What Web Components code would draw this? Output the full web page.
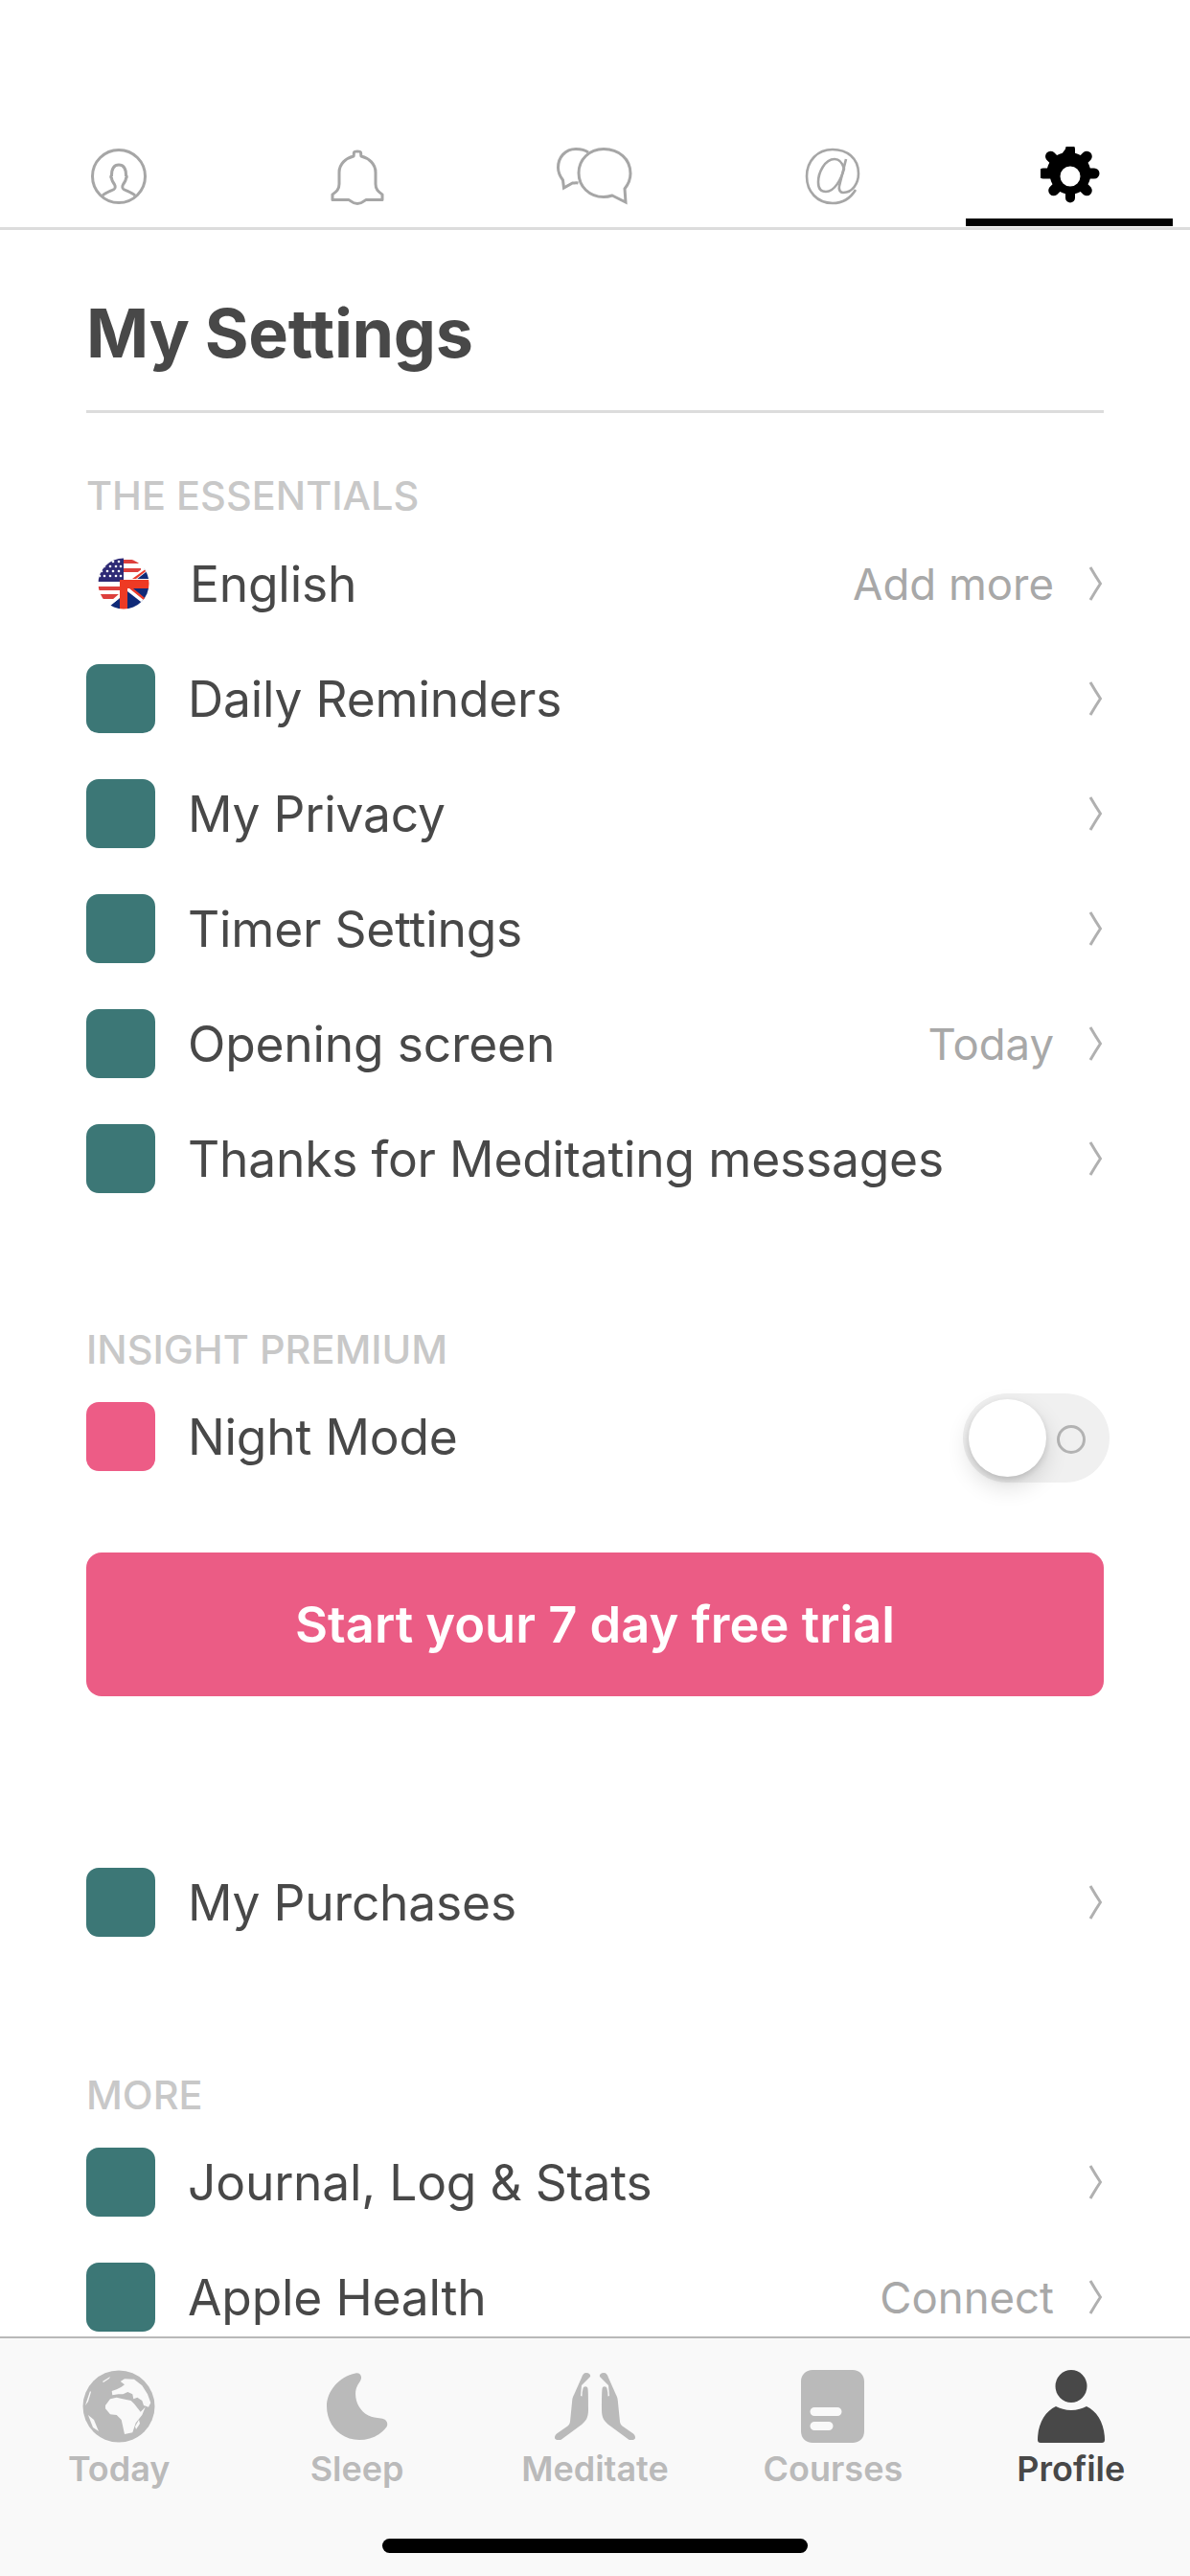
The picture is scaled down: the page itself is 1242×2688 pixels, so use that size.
<!DOCTYPE html>
<html>
<head>
<meta charset="utf-8">
<title>My Settings</title>
<style>
  html, body { margin: 0; padding: 0; background: #fff; }
  body { font-family: Inter, "Liberation Sans", sans-serif; width: 1242px; height: 2688px; overflow: hidden; }
</style>
</head>
<body>
<app-shell>
  <top-tabs></top-tabs>
  <settings-title>My Settings</settings-title>

  <section-label top="61" bottom="7">THE ESSENTIALS</section-label>
  <setting-row icon="flag" value="Add more">English</setting-row>
  <setting-row>Daily Reminders</setting-row>
  <setting-row>My Privacy</setting-row>
  <setting-row>Timer Settings</setting-row>
  <setting-row value="Today">Opening screen</setting-row>
  <setting-row>Thanks for Meditating messages</setting-row>

  <section-label top="114" bottom="6">INSIGHT PREMIUM</section-label>
  <setting-row icon="pink" toggle>Night Mode</setting-row>
  <trial-button>Start your 7 day free trial</trial-button>

  <spacer-gap h="155"></spacer-gap>
  <setting-row>My Purchases</setting-row>

  <section-label top="116" bottom="6">MORE</section-label>
  <setting-row>Journal, Log &amp; Stats</setting-row>
  <setting-row value="Connect">Apple Health</setting-row>

  <bottom-nav slot="nav"></bottom-nav>
</app-shell>

<script>
class AppShell extends HTMLElement {
  constructor() {
    super();
    this.attachShadow({ mode: 'open' });
    this.shadowRoot.innerHTML = `
      <style>
        :host { display: flex; flex-direction: column; width: 1242px; height: 2688px; background: #fff; }
        .scroll { flex: 1; min-height: 0; overflow: hidden; display: flex; flex-direction: column; }
        ::slotted(*) { flex: none; }
      </style>
      <div class="scroll"><slot></slot></div>
      <slot name="nav"></slot>
    `;
  }
}

const tabIcons = [
  `<svg width="60" height="60" viewBox="0 0 60 60" fill="none" stroke="#a6a6a6" stroke-width="3">
    <circle cx="30" cy="30" r="27.500"/>
    <path d="M13 50c3-3 8-4.500 12-6.500 1.500-.8 1.500-3.500.5-5-1.500-2-3-4.500-3-6.500-1-.5-1-2.500 0-3 0-5 1.500-11 7.500-11s7.500 6 7.500 11c1 .5 1 2.500 0 3 0 2-1.500 4.500-3 6.500-1 1.500-1 4.200.5 5 4 2 9 3.500 12 6.500"/>
  </svg>`,
  `<svg width="56" height="60" viewBox="0 0 56 60" fill="none" stroke="#a6a6a6" stroke-width="3" stroke-linejoin="round">
    <path d="M2 54.500v-5.500c4-3 7-5 7-11V26c0-9 7-15 15-17 .5-1 0-2 .5-4 .5-1.500 6.500-1.500 7 0 .5 2 0 3 .5 4 8 2 15 8 15 17v12c0 6 3 8 7 11v5.500H37c-2 1-4 4-9 4s-7-3-9-4z"/>
  </svg>`,
  `<svg width="80" height="60" viewBox="0 0 80 60" fill="none" stroke="#a6a6a6" stroke-width="3">
    <path d="M33 5C29 2 24 1.500 20 1.500 9 1.500 1.500 10 1.500 21c0 5 2 9 5 13l1 8 9-5c2 0 4-.5 6 0"/>
    <path d="M49 1.500C65 1.500 77 12 77 27c0 6-2 11-6 16l1 14-14-7c-3 1-6 1.500-9 1.500-15 0-26-11-26-25S34 1.500 49 1.500z"/>
  </svg>`,
  `<svg width="58" height="60" viewBox="0 0 58 60" fill="none" stroke="#a6a6a6" stroke-width="2.600">
    <path d="M43 12L36 40c-1 4 1 7 4 7C50 47 56 37 56 27 56 11 44 2 29 2 13 2 2 14 2 30c0 16 11 28 27 28 10 0 18-4 24-14"/>
    <path d="M41 22C39 15 36 12 31 12 21 12 14 26 14 36c0 7 3 10 8 10 9 0 16-13 19-24z"/>
  </svg>`,
  `<svg width="62" height="62" viewBox="0 0 62 62">
    <path fill="#000" fill-rule="evenodd" d="M26 2.500a5 5 0 0 1 10 0v4.300c2 .5 4 1.300 5.700 2.300l3-3a5.500 5.500 0 0 1 7.800 7.700l-3 3c1 1.800 1.800 3.700 2.300 5.700h4.200a5.500 5.500 0 0 1 0 11h-4.200c-.5 2-1.300 3.900-2.300 5.700l3 3a5.500 5.500 0 0 1-7.800 7.700l-3-3c-1.700 1-3.700 1.800-5.700 2.300v4.200a5 5 0 0 1-10 0v-4.200c-2-.5-4-1.300-5.700-2.300l-3 3a5.500 5.500 0 0 1-7.800-7.700l3-3c-1-1.800-1.800-3.700-2.300-5.700H2.800a5.500 5.500 0 0 1 0-11H7c.5-2 1.300-3.900 2.300-5.700l-3-3a5.500 5.500 0 0 1 7.800-7.700l3 3c1.700-1 3.700-1.800 5.700-2.300z M31 20.500a10.500 10.500 0 1 0 0 21 10.500 10.500 0 0 0 0-21z"/>
  </svg>`
];

class TopTabs extends HTMLElement {
  constructor() {
    super();
    this.attachShadow({ mode: 'open' });
    this.shadowRoot.innerHTML = `
      <style>
        :host { display: grid; grid-template-columns: repeat(5, 1fr); height: 240px; box-sizing: border-box; padding-top: 153px; border-bottom: 3px solid #dcdcdc; }
        .tab { display: flex; justify-content: center; align-items: center; height: 62px; }
        .tab.on { position: relative; }
        .tab.on::after { content: ''; position: absolute; left: 14.400px; right: 18px; top: 75px; height: 8px; background: #000; }
        .tab.on svg { margin-right: 2px; }
      </style>
      ${tabIcons.map((svg, i) => `<div class="tab ${i === 4 ? 'on' : ''}">${svg}</div>`).join('')}
    `;
  }
}

class SettingsTitle extends HTMLElement {
  constructor() {
    super();
    this.attachShadow({ mode: 'open' });
    this.shadowRoot.innerHTML = `
      <style>
        :host { display: block; margin: 0 90px; height: 191px; box-sizing: border-box; padding-top: 68px; border-bottom: 3px solid #dcdcdc; color: #484848; font-size: 70px; font-weight: 700; line-height: 80px; letter-spacing: -0.3px; }
      </style>
      <slot></slot>
    `;
  }
}

class SectionLabel extends HTMLElement {
  constructor() {
    super();
    this.attachShadow({ mode: 'open' });
    const top = this.getAttribute('top') || '60';
    const bottom = this.getAttribute('bottom') || '6';
    this.shadowRoot.innerHTML = `
      <style>
        :host { display: block; margin: ${top}px 90px ${bottom}px; color: #c8c8c8; font-size: 41.500px; font-weight: 500; line-height: 50px; }
      </style>
      <slot></slot>
    `;
  }
}

const flagIcon = `
  <svg width="54" height="54" viewBox="0 0 54 54">
    <defs><clipPath id="c"><circle cx="27" cy="27" r="26.500"/></clipPath></defs>
    <g clip-path="url(#c)">
      <rect width="54" height="54" fill="#fff"/>
      <path d="M27 2h18v4H27zM27 11h18v4H27zM0 30h23v4H0zM0 38h23v5H0z" fill="#dd3f3c"/>
      <path d="M0 0h27v25H0z" fill="#2e2a75"/>
      <path d="M45 14L54 8v14H38z" fill="#0f2a78"/>
      <path d="M31 23L54 6v6L40 23z" fill="#fff"/>
      <path d="M36 22L54 9v2L40 22z" fill="#ea3a2a"/>
      <path d="M31 32h23v22H31z" fill="#0f2a78"/>
      <path d="M34 32l20 16v5L31 35v-3z" fill="#fff"/>
      <path d="M37 32l17 14v3L33 32z" fill="#ea3a2a"/>
      <path d="M23 42v12H8z" fill="#0f2a78"/>
      <path d="M23 37L6 52l2 2 15-12z" fill="#fff"/>
      <path d="M23 23h31v9H31v22h-8z" fill="#ee3a24"/>
      <g fill="#fff">
        <circle cx="7" cy="9" r="1.300"/><circle cx="13" cy="9" r="1.300"/><circle cx="19" cy="9" r="1.300"/><circle cx="24" cy="9" r="1.300"/>
        <circle cx="16" cy="4" r="1.300"/><circle cx="22" cy="4" r="1.300"/>
        <circle cx="4" cy="14" r="1.300"/><circle cx="10" cy="14" r="1.300"/><circle cx="16" cy="14" r="1.300"/><circle cx="22" cy="14" r="1.300"/>
        <circle cx="2" cy="19" r="1.300"/><circle cx="7" cy="19" r="1.300"/><circle cx="13" cy="19" r="1.300"/><circle cx="19" cy="19" r="1.300"/><circle cx="24" cy="19" r="1.300"/>
      </g>
    </g>
  </svg>`;

class SettingRow extends HTMLElement {
  constructor() {
    super();
    this.attachShadow({ mode: 'open' });
    const icon = this.getAttribute('icon');
    const value = this.getAttribute('value');
    const isToggle = this.hasAttribute('toggle');
    const lead = icon === 'flag'
      ? `<div class="flag">${flagIcon}</div>`
      : `<div class="sq ${icon === 'pink' ? 'pink' : ''}"></div>`;
    const tail = isToggle
      ? `<toggle-switch></toggle-switch>`
      : `${value ? `<span class="value">${value}</span>` : ''}
         <svg class="chev" width="16" height="36" viewBox="0 0 16 36" fill="none" stroke="#b0b0b0" stroke-width="3"><path d="M2 1c3.500 6 6.500 11 10.500 17C8.500 24 5.500 29 2 35"/></svg>`;
    this.shadowRoot.innerHTML = `
      <style>
        :host { display: flex; align-items: center; height: 120px; margin: 0 90px; color: #484848; font-size: 51.500px; letter-spacing: -0.2px; }
        .sq { width: 72px; height: 72px; border-radius: 13px; background: #3c7776; flex: none; }
        .sq.pink { background: #ed5c86; }
        .flag { width: 72px; display: flex; justify-content: center; flex: none; padding-left: 6px; box-sizing: border-box; }
        .flag svg { display: block; }
        .label { margin-left: 34px; flex: 1; white-space: nowrap; }
        :host([icon="flag"]) .label { margin-left: 36px; }
        .value { color: #a8a8a8; margin-right: 36px; font-size: 45.500px; letter-spacing: 0; }
        .chev { flex: none; }
      </style>
      ${lead}
      <div class="label"><slot></slot></div>
      ${tail}
    `;
  }
}

class ToggleSwitch extends HTMLElement {
  constructor() {
    super();
    this.attachShadow({ mode: 'open' });
    this.shadowRoot.innerHTML = `
      <style>
        :host { display: block; position: relative; width: 153px; height: 93px; margin: 2px -6px 0 0; border-radius: 47px; background: #f0f0f0; }
        .knob { position: absolute; left: 6px; top: 6px; width: 81px; height: 81px; border-radius: 50%; background: #fff; box-shadow: 0 3px 6px rgba(0,0,0,.12), 0 10px 24px rgba(0,0,0,.14); }
        .ring { position: absolute; left: 98px; top: 33px; width: 30px; height: 30px; box-sizing: border-box; border: 3.500px solid #b3b3b3; border-radius: 50%; }
      </style>
      <div class="ring"></div>
      <div class="knob"></div>
    `;
  }
}

class TrialButton extends HTMLElement {
  constructor() {
    super();
    this.attachShadow({ mode: 'open' });
    this.shadowRoot.innerHTML = `
      <style>
        :host { display: flex; justify-content: center; align-items: center; height: 150px; margin: 61px 90px 0; border-radius: 16px; background: #eb5c85; color: #fff; font-size: 52.400px; font-weight: 600; }
      </style>
      <slot></slot>
    `;
  }
}

class SpacerGap extends HTMLElement {
  constructor() {
    super();
    this.attachShadow({ mode: 'open' });
    this.shadowRoot.innerHTML = `<style>:host { display: block; height: ${this.getAttribute('h')}px; }</style>`;
  }
}

const navIcons = [
  `<svg width="76" height="76" viewBox="0 0 76 76">
    <circle cx="38" cy="38" r="37.500" fill="#bababa"/>
    <g fill="#f9f9f9">
      <path d="M39.700 12L44 9.300 54 9.700 62.300 16.300 68 25.300 71.300 34.300 69 38.700 64 37 62.300 32 57.300 28.700 53.300 30.300 52.300 25.300 47.300 23 42.300 25.300 37.300 25.300 31.300 26.300 30.700 22 35.700 20.300 40.700 17.700 44 15.300z"/>
      <path d="M24 37L29 30.300 35.700 28.700 42.300 30.300 50.700 32 54 35.300 60.700 43.700 65.700 38.700 62.300 47 55.700 55.300 52.300 65.300 44 67 40.700 52 35.700 47 29 46.300 24 40.300z"/>
      <path d="M59 52L60 56 56 62 55 59z"/>
      <path d="M3 37L8 22 9 23 6 33z"/>
      <path d="M21 12L29 7 28 9 22 13z"/>
      <path d="M6 47L12 52 17 64 11 60z"/>
    </g>
  </svg>`,
  `<svg width="64" height="70" viewBox="0 0 64 70">
    <path fill="#bababa" d="M30 .500c3.500-1 6.500 1.500 6 5-.5 4-4 6-5.500 12-2 10 3 22 13 27 4 2 8 2.500 13 3 6 .5 8 5 6 9C55 66 45 70 34 70 15 70 0 55 0 35 0 19 13 4 30 .500z"/>
  </svg>`,
  `<svg width="84" height="70" viewBox="0 0 84 70" fill="#bababa">
    <path d="M33 0c-3 0-4 2-5 5l-8 18c-1 2-1.500 3-1.800 6l-2.200 22c-.3 2-1 3-2.500 4.500L2 63.500C.5 65 0 66 0 68c0 1 3.500 4 7 1.500l19-14c7-5 9-9 9-17 0-10 0-18-.5-22-.3-3-4.500-3-5 0l-.8 4-.2 4-1.500-.5 1-11L37 4c.7-2-1-4-4-4zM51 0c3 0 4 2 5 5l8 18c1 2 1.500 3 1.800 6l2.200 22c.3 2 1 3 2.500 4.500L82 63.500c1.500 1.500 2 2.500 2 4.500 0 1-3.500 4-7 1.500l-19-14c-7-5-9-9-9-17 0-10 0-18 .5-22 .3-3 4.500-3 5 0l.8 4 .2 4 1.500-.5-1-11L47 4c-.7-2 1-4 4-4z"/>
  </svg>`,
  `<svg width="66" height="76" viewBox="0 0 66 76">
    <path fill="#bababa" fill-rule="evenodd" d="M12 0h42c7 0 12 5 12 12v52c0 7-5 12-12 12H12C5 76 0 71 0 64V12C0 5 5 0 12 0zM14 39a4.500 4.500 0 0 0 0 9h24a4.500 4.500 0 0 0 0-9zM14 54a4.500 4.500 0 0 0 0 9h15a4.500 4.500 0 0 0 0-9z"/>
  </svg>`,
  `<svg width="70" height="76" viewBox="0 0 70 76">
    <ellipse cx="35" cy="17" rx="16.500" ry="17" fill="#484848"/>
    <path fill="#484848" d="M19 38c4 2 10 4 16 4s12-2 16-4c11 5 19 18 19 35 0 2-1 3-3 3H3c-2 0-3-1-3-3 0-17 8-30 19-35z"/>
  </svg>`
];

class BottomNav extends HTMLElement {
  constructor() {
    super();
    this.attachShadow({ mode: 'open' });
    const labels = ['Today', 'Sleep', 'Meditate', 'Courses', 'Profile'];
    this.shadowRoot.innerHTML = `
      <style>
        :host { display: block; position: relative; height: 250px; box-sizing: border-box; padding-top: 33px; border-top: 2px solid #b8b8b8; background: #f9f9f9; }
        .items { display: grid; grid-template-columns: repeat(5, 1fr); }
        .item { display: flex; flex-direction: column; align-items: center; color: #bababa; font-size: 36px; font-weight: 600; }
        .item.on { color: #484848; }
        .pic { height: 76px; display: flex; align-items: center; justify-content: center; }
        .pic svg { display: block; }
        .name { line-height: 44px; margin-top: 5px; }
        .home { position: absolute; left: 399px; top: 209px; width: 444px; height: 15px; border-radius: 8px; background: #000; }
      </style>
      <div class="items">
        ${labels.map((t, i) => `<div class="item ${i === 4 ? 'on' : ''}"><div class="pic">${navIcons[i]}</div><div class="name">${t}</div></div>`).join('')}
      </div>
      <div class="home"></div>
    `;
  }
}

customElements.define('app-shell', AppShell);
customElements.define('top-tabs', TopTabs);
customElements.define('settings-title', SettingsTitle);
customElements.define('section-label', SectionLabel);
customElements.define('setting-row', SettingRow);
customElements.define('toggle-switch', ToggleSwitch);
customElements.define('trial-button', TrialButton);
customElements.define('spacer-gap', SpacerGap);
customElements.define('bottom-nav', BottomNav);
</script>
</body>
</html>
